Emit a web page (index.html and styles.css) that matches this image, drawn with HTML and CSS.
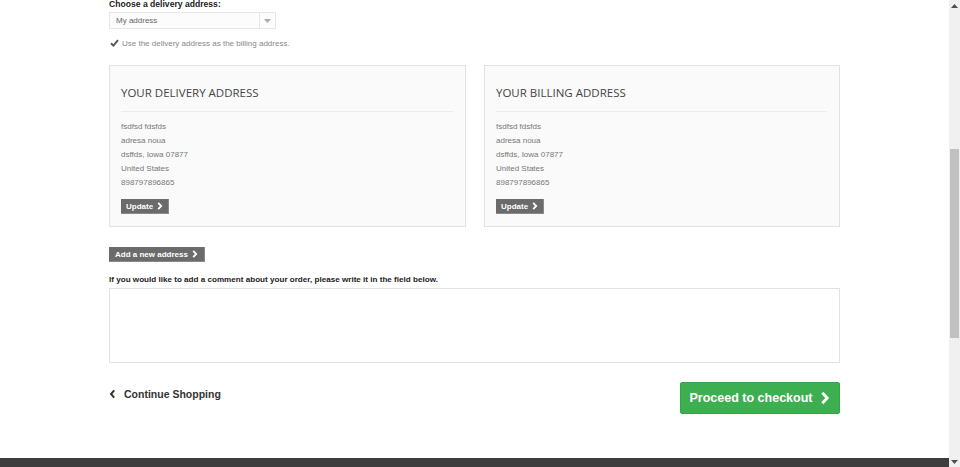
FILE: index.html
```html
<!DOCTYPE html>
<html>
<head>
<meta charset="utf-8">
<link rel="stylesheet" href="styles.css">
</head>
<body>
<div class="page">
  <main class="main">
    <div class="container">
      <div class="choose-label">Choose a delivery address:</div>
      <div class="select">
        <span class="select-text">My address</span>
        <span class="select-arrow"><svg width="7" height="4" viewBox="0 0 7 4"><polygon points="0,0 7,0 3.5,4" fill="#aaa"/></svg></span>
      </div>
      <label class="check-row">
        <span class="checkbox"><svg width="9" height="8" viewBox="0 0 9 8"><polyline points="1,4.3 3.4,6.6 8,1.2" fill="none" stroke="#555" stroke-width="1.9"/></svg></span>
        <span class="check-text">Use the delivery address as the billing address.</span>
      </label>

      <div class="addresses">
        <div class="address-box">
          <h3 class="address-title">YOUR DELIVERY ADDRESS</h3>
          <ul class="address-lines">
            <li>fsdfsd fdsfds</li>
            <li>adresa noua</li>
            <li>dsffds, Iowa 07877</li>
            <li>United States</li>
            <li>898797896865</li>
          </ul>
          <span class="btn-gray">Update <svg class="chev" width="6" height="8" viewBox="0 0 6 8"><polyline points="1.2,0.9 4.2,4 1.2,7.1" fill="none" stroke="#fff" stroke-width="1.8"/></svg></span>
        </div>
        <div class="address-box">
          <h3 class="address-title">YOUR BILLING ADDRESS</h3>
          <ul class="address-lines">
            <li>fsdfsd fdsfds</li>
            <li>adresa noua</li>
            <li>dsffds, Iowa 07877</li>
            <li>United States</li>
            <li>898797896865</li>
          </ul>
          <span class="btn-gray">Update <svg class="chev" width="6" height="8" viewBox="0 0 6 8"><polyline points="1.2,0.9 4.2,4 1.2,7.1" fill="none" stroke="#fff" stroke-width="1.8"/></svg></span>
        </div>
      </div>

      <span class="btn-gray btn-add">Add a new address <svg class="chev" width="6" height="8" viewBox="0 0 6 8"><polyline points="1.2,0.9 4.2,4 1.2,7.1" fill="none" stroke="#fff" stroke-width="1.8"/></svg></span>

      <div class="comment-label">If you would like to add a comment about your order, please write it in the field below.</div>
      <div class="comment-box"></div>

      <div class="bottom-row">
        <a class="continue"><svg width="7" height="10" viewBox="0 0 7 10"><polyline points="5.2,1.3 2,5 5.2,8.7" fill="none" stroke="#333" stroke-width="2"/></svg><span>Continue Shopping</span></a>
        <a class="checkout">Proceed to checkout <svg width="10" height="14" viewBox="0 0 10 14"><polyline points="2.3,1.8 7.2,7 2.3,12.2" fill="none" stroke="#fff" stroke-width="2.8"/></svg></a>
      </div>
    </div>
    <footer class="footer"></footer>
  </main>
  <div class="scrollbar">
    <div class="sb-arrow"><svg width="7" height="4" viewBox="0 0 7 4"><polygon points="3.5,0 7,4 0,4" fill="#505050"/></svg></div>
    <div class="sb-track"><div class="sb-thumb"></div></div>
    <div class="sb-arrow"><svg width="7" height="4" viewBox="0 0 7 4"><polygon points="0,0 7,0 3.5,4" fill="#505050"/></svg></div>
  </div>
</div>
</body>
</html>
```
FILE: styles.css
```css
* { box-sizing: border-box; }
html, body { margin: 0; padding: 0; }
body {
  font-family: "Liberation Sans", Arial, sans-serif;
  color: #333;
  background: #fff;
}
.page {
  display: flex;
  width: 960px;
  height: 467px;
  overflow: hidden;
}
.main {
  flex: 1;
  display: flex;
  flex-direction: column;
  min-width: 0;
}
.container {
  width: 731px;
  margin: 0 auto;
  display: flex;
  flex-direction: column;
  align-items: flex-start;
}
.choose-label {
  font-size: 8.6px;
  font-weight: bold;
  line-height: 8px;
  color: #222;
}
.select {
  margin-top: 4px;
  width: 167px;
  height: 17px;
  border: 1px solid #e6e6e6;
  background: #fcfcfc;
  display: flex;
  align-items: stretch;
}
.select-text {
  flex: 1;
  font-size: 8px;
  line-height: 15px;
  padding-left: 6px;
  color: #666;
}
.select-arrow {
  width: 16px;
  border-left: 1px solid #e6e6e6;
  display: flex;
  align-items: center;
  justify-content: center;
}
.check-row {
  margin-top: 8px;
  height: 12px;
  display: flex;
  align-items: center;
  gap: 3px;
}
.checkbox {
  width: 10px;
  height: 10px;
  display: flex;
  align-items: center;
  justify-content: center;
}
.check-text {
  font-size: 8px;
  color: #888;
}
.addresses {
  margin-top: 16px;
  width: 100%;
  display: grid;
  grid-template-columns: 357px 356px;
  column-gap: 18px;
}
.address-box {
  height: 162px;
  border: 1px solid #e2e2e2;
  background: #fafafa;
  padding: 20px 12px 0 11px;
}
.address-title {
  margin: 0;
  font-family: "Open Sans", sans-serif;
  font-weight: 400;
  font-size: 11.5px;
  line-height: 14px;
  color: #444;
  padding-bottom: 11px;
  border-bottom: 1px solid #ececec;
}
.address-lines {
  list-style: none;
  margin: 8px 0 0;
  padding: 0;
  font-size: 8px;
  line-height: 14px;
  color: #777;
}
.btn-gray {
  margin-top: 9px;
  display: inline-flex;
  align-items: center;
  gap: 4px;
  height: 15px;
  padding: 0 5px;
  background: #6b6b6b;
  color: #fff;
  font-size: 8px;
  font-weight: bold;
  border-right: 1px solid #8a8a8a;
  border-bottom: 1px solid #8a8a8a;
}
.chev { display: block; }
.btn-add {
  margin-top: 20px;
  height: 15px;
  padding: 0 6px;
}
.comment-label {
  margin-top: 13px;
  font-size: 8.1px;
  line-height: 10px;
  font-weight: bold;
  color: #222;
}
.comment-box {
  margin-top: 3px;
  width: 100%;
  height: 75px;
  border: 1px solid #e2e2e2;
  background: #fff;
}
.bottom-row {
  margin-top: 19px;
  width: 100%;
  display: flex;
  justify-content: space-between;
  align-items: flex-start;
}
.continue {
  margin-top: 5px;
  display: flex;
  align-items: center;
  gap: 8px;
  font-size: 10.5px;
  font-weight: bold;
  line-height: 14px;
  color: #333;
}
.checkout {
  width: 160px;
  height: 32px;
  background: #3daf50;
  border: 1px solid #36a148;
  border-radius: 2px;
  color: #fff;
  font-size: 12.5px;
  font-weight: bold;
  display: flex;
  align-items: center;
  justify-content: center;
  gap: 8px;
}
.footer {
  margin-top: auto;
  height: 9px;
  background: #3d3d3d;
}
.scrollbar {
  width: 11px;
  background: #f0f0f0;
  display: flex;
  flex-direction: column;
}
.sb-arrow {
  height: 11px;
  display: flex;
  align-items: center;
  justify-content: center;
}
.sb-track {
  flex: 1;
  padding-top: 138px;
}
.sb-thumb {
  margin-left: 1px;
  width: 9px;
  height: 189px;
  background: #c1c1c1;
}
```
